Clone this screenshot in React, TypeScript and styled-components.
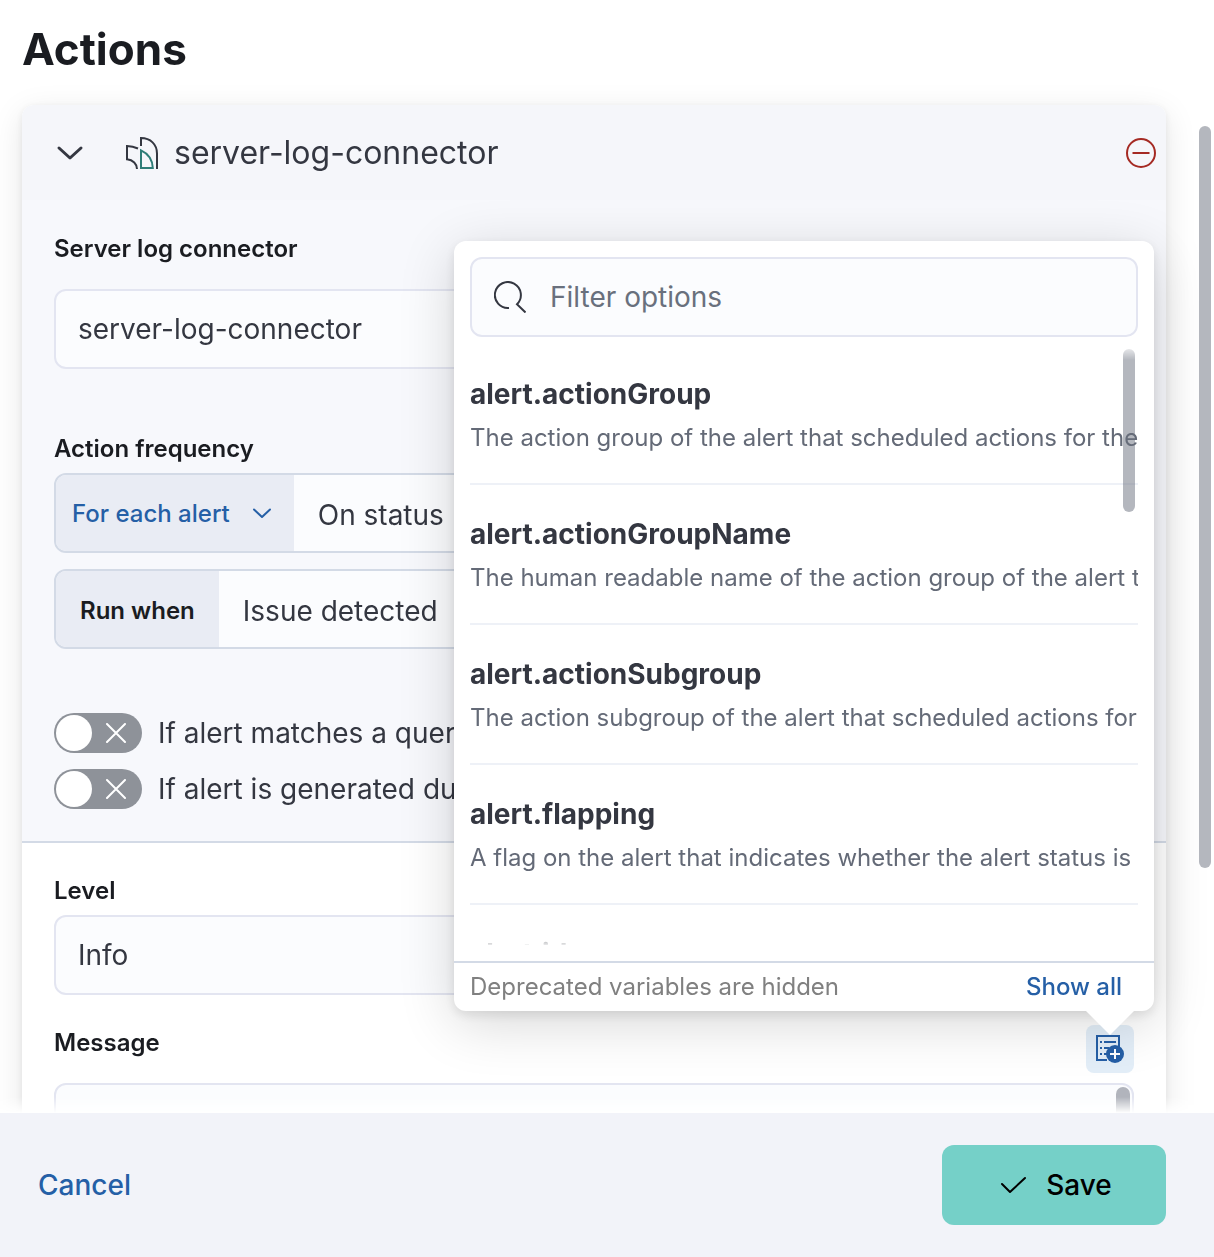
import React, { useState } from "react";
import styled, { createGlobalStyle, css } from "styled-components";

const color = {
  ink: "#1a1c21",
  text: "#343741",
  subdued: "#646a77",
  primary: "#255fa6",
  border: "#d3dae6",
  fieldBorder: "#e3e5f1",
  field: "#fbfcfe",
  prepend: "#e9ecf4",
  danger: "#a52a23",
  thumb: "rgba(105, 112, 125, 0.5)",
};

const GlobalStyle = createGlobalStyle`
  *, *::before, *::after { box-sizing: border-box; }
  body { margin: 0; background: #fff; }
  body, button, input, select, textarea {
    font-family: Inter, "Liberation Sans", sans-serif;
    font-size: 28px;
    color: ${color.text};
  }
  button { border: 0; background: none; padding: 0; cursor: pointer; }
`;

const Flyout = styled.div`
  display: flex;
  flex-direction: column;
  height: 100vh;
`;

const Body = styled.main`
  position: relative;
  flex: 1;
  min-height: 0;
  overflow: hidden;
  padding: 21px 48px 0 22px;
  mask-image: linear-gradient(to top, transparent 0, #000 16px);
`;

const Title = styled.h1`
  margin: 0 0 28px;
  font-size: 44px;
  line-height: 56px;
  font-weight: 700;
  color: ${color.ink};
`;

const PageThumb = styled.div`
  position: absolute;
  top: 126px;
  right: 3px;
  width: 12px;
  height: 742px;
  border-radius: 6px;
  background: ${color.thumb};
`;

const Card = styled.section`
  border-radius: 12px;
  background: #fff;
  box-shadow: 0 2px 8px rgba(0, 0, 0, 0.08), 0 8px 32px rgba(0, 0, 0, 0.1);
`;

const CardHeader = styled.header`
  display: flex;
  align-items: center;
  height: 95px;
  padding: 0 10px 0 32px;
  border-radius: 12px 12px 0 0;
  background: #f5f6fa;
`;

const IconButton = styled.button`
  display: flex;
  align-items: center;
  justify-content: center;
`;

const ConnectorName = styled.h2`
  display: flex;
  align-items: center;
  gap: 16px;
  flex: 1;
  margin: 0 0 0 40px;
  font-size: 32px;
  line-height: 48px;
  font-weight: 400;
`;

const Settings = styled.div`
  padding: 31px 32px 32px;
  border-bottom: 2px solid ${color.border};
  background: #f7f8fc;
`;

const Params = styled.div`
  padding: 30px 32px 32px;
`;

const Field = styled.div<{ $gap?: number; $space?: number }>`
  display: flex;
  flex-direction: column;
  gap: ${(p) => p.$gap ?? 6}px;
  margin-bottom: ${(p) => p.$space ?? 0}px;
`;

const labelText = css`
  font-size: 24px;
  line-height: 36px;
  font-weight: 600;
  color: ${color.ink};
`;

const Label = styled.label`
  ${labelText}
`;

const Select = styled.select`
  appearance: none;
  width: 100%;
  height: 80px;
  padding: 0 22px;
  border: 2px solid ${color.fieldBorder};
  border-radius: 12px;
  background: ${color.field};
`;

const Group = styled.div`
  display: flex;
  height: 80px;
  margin-bottom: 16px;
  border: 2px solid ${color.border};
  border-radius: 12px;
  background: ${color.field};
  overflow: hidden;
`;

const GroupSelect = styled.select`
  appearance: none;
  flex: 1;
  min-width: 0;
  padding: 4px 24px 0;
  border: 0;
  background: transparent;
`;

const PrependButton = styled.button`
  display: flex;
  align-items: center;
  gap: 20px;
  padding: 0 20px 0 16px;
  background: ${color.prepend};
  color: ${color.primary};
  font-size: 24px;
  font-weight: 500;
`;

const PrependLabel = styled.label`
  ${labelText}
  display: flex;
  align-items: center;
  padding: 4px 24px 0;
  background: ${color.prepend};
`;

const Switches = styled.div`
  display: flex;
  flex-direction: column;
  gap: 16px;
  margin-top: 64px;
`;

const SwitchRow = styled.label`
  display: flex;
  align-items: center;
  gap: 16px;
  height: 40px;
  white-space: nowrap;
`;

const SwitchInput = styled.input`
  position: absolute;
  opacity: 0;
`;

const Track = styled.span<{ $on: boolean }>`
  display: flex;
  flex-direction: ${(p) => (p.$on ? "row-reverse" : "row")};
  align-items: center;
  justify-content: space-between;
  width: 88px;
  height: 40px;
  padding: ${(p) => (p.$on ? "0 2px 0 16px" : "0 16px 0 2px")};
  border-radius: 20px;
  background: ${(p) => (p.$on ? color.primary : "#8e9299")};
`;

const Knob = styled.span`
  width: 36px;
  height: 36px;
  border-radius: 50%;
  background: #fff;
`;

const MessageHead = styled.div`
  display: flex;
  justify-content: space-between;
  align-items: flex-start;
`;

const Anchor = styled.div`
  position: relative;
`;

const AddVariable = styled.button`
  display: flex;
  align-items: center;
  justify-content: center;
  width: 48px;
  height: 48px;
  border-radius: 8px;
  background: #e3eef8;
`;

const MessageBox = styled.div`
  position: relative;
  display: flex;
`;

const TextArea = styled.textarea`
  flex: 1;
  height: 240px;
  padding: 22px;
  border: 2px solid ${color.fieldBorder};
  border-radius: 12px;
  background: ${color.field};
  resize: none;
`;

const MessageThumb = styled.div`
  position: absolute;
  top: 4px;
  right: 4px;
  width: 14px;
  height: 120px;
  border-radius: 7px;
  background: #b1b4bc;
`;

const Popover = styled.div`
  position: absolute;
  right: -20px;
  bottom: calc(100% + 14px);
  width: min(700px, calc(100vw - 100px));
  padding-top: 16px;
  border-radius: 12px;
  background: #fff;
  box-shadow: 0 4px 12px rgba(0, 0, 0, 0.1), 0 12px 56px rgba(0, 0, 0, 0.16);
`;

const Arrow = styled.div`
  position: absolute;
  top: 100%;
  right: 20px;
  width: 48px;
  height: 24px;
  background: #fff;
  clip-path: polygon(0 0, 100% 0, 50% 100%);
`;

const Search = styled.label`
  display: flex;
  align-items: center;
  gap: 24px;
  height: 80px;
  margin: 0 16px 8px;
  padding: 0 22px;
  border: 2px solid ${color.fieldBorder};
  border-radius: 12px;
  background: ${color.field};
`;

const SearchInput = styled.input`
  flex: 1;
  min-width: 0;
  padding: 0;
  border: 0;
  outline: 0;
  background: transparent;
  &::placeholder { color: #69707d; opacity: 1; }
`;

const ListFrame = styled.div`
  position: relative;
  height: 600px;
  margin: 0 16px 16px;
  overflow: hidden;
  mask-image: linear-gradient(
    to bottom,
    rgba(0, 0, 0, 0.1) 0,
    #000 15px,
    #000 calc(100% - 15px),
    rgba(0, 0, 0, 0.1) 100%
  );
`;

const List = styled.ul`
  margin: 0;
  padding: 0;
  list-style: none;
`;

const Item = styled.li`
  display: flex;
  flex-direction: column;
  gap: 4px;
  padding: 28px 0 26px;
  border-bottom: 2px solid #eef1f7;
  white-space: nowrap;
`;

const ItemName = styled.strong`
  line-height: 42px;
  font-weight: 700;
`;

const ItemText = styled.span`
  font-size: 24px;
  line-height: 38px;
  color: ${color.subdued};
`;

const ListThumb = styled.div`
  position: absolute;
  top: 4px;
  right: 3px;
  width: 12px;
  height: 163px;
  border-radius: 6px;
  background: ${color.thumb};
`;

const PopoverFooter = styled.div`
  display: flex;
  align-items: center;
  justify-content: space-between;
  height: 50px;
  padding: 0 32px 2px 16px;
  border-top: 2px solid ${color.border};
  font-size: 24px;
  color: #808080;
`;

const TextButton = styled.button<{ $small?: boolean }>`
  font-size: ${(p) => (p.$small ? 24 : 28)}px;
  font-weight: 500;
  color: ${color.primary};
`;

const Footer = styled.footer`
  display: flex;
  align-items: center;
  justify-content: space-between;
  height: 144px;
  padding: 0 48px 0 38px;
  background: #f2f3f9;
`;

const SaveButton = styled.button`
  display: flex;
  align-items: center;
  justify-content: center;
  gap: 20px;
  width: 224px;
  height: 80px;
  padding-left: 4px;
  border-radius: 12px;
  background: #75d0c8;
  color: #000;
  font-weight: 500;
`;

const ChevronIcon = () => (
  <svg width="32" height="32" viewBox="0 0 32 32" fill="none" stroke="#343741" strokeWidth="3" strokeLinecap="round" strokeLinejoin="round">
    <path d="M5 11 16 21 27 11" />
  </svg>
);

const SmallChevronIcon = () => (
  <svg width="24" height="24" viewBox="0 0 24 24" fill="none" stroke={color.primary} strokeWidth="2" strokeLinecap="round" strokeLinejoin="round">
    <path d="M4 8.500 12 16 20 8.500" />
  </svg>
);

const LogsIcon = () => (
  <svg width="32" height="32" viewBox="0 0 32 32" fill="none" stroke="#343741" strokeWidth="2">
    <path d="M12 11.500C8.500 10 5 9.200 1 9V22.300C7 22.800 11 27 11 32" />
    <path d="M15 9V1C24.500 1 31 7.500 31 16.500V32" />
    <path d="M15 13.300V31H26.800C26.500 23 22 16.500 15 13.300Z" stroke="#2f7d78" />
  </svg>
);

const RemoveIcon = () => (
  <svg width="30" height="30" viewBox="0 0 30 30" fill="none" stroke={color.danger} strokeWidth="2">
    <circle cx="15" cy="15" r="14" />
    <path d="M6.500 15H23.500" />
  </svg>
);

const CrossIcon = () => (
  <svg width="20" height="20" viewBox="0 0 20 20" fill="none" stroke="#fff" strokeWidth="2" strokeLinecap="round">
    <path d="M1 1 19 19M19 1 1 19" />
  </svg>
);

const SearchIcon = () => (
  <svg width="32" height="32" viewBox="0 0 32 32" fill="none" stroke="#343741" strokeWidth="2">
    <path d="M15 27A13 13 0 1 1 23 23.300L31.500 31.500" />
  </svg>
);

const CheckIcon = () => (
  <svg width="26" height="20" viewBox="0 0 26 20" fill="none" stroke="#000" strokeWidth="2" strokeLinecap="round" strokeLinejoin="round">
    <path d="M2 9 10 17 25 3" />
  </svg>
);

const VariableIcon = () => (
  <svg width="28" height="28" viewBox="0 0 28 28" fill="none" stroke={color.primary} strokeWidth="2">
    <path d="M11 25H1V1H23V12" />
    <path d="M4 7H6M8 7H20M4 13H6M8 13H13M4 19H6M8 19H11" />
    <circle cx="19" cy="19" r="9" fill={color.primary} stroke="none" />
    <path d="M14 19H24M19 14V24" stroke="#fff" />
  </svg>
);

const variables = [
  ["alert.actionGroup", "The action group of the alert that scheduled actions for the rule."],
  ["alert.actionGroupName", "The human readable name of the action group of the alert that scheduled actions for the rule."],
  ["alert.actionSubgroup", "The action subgroup of the alert that scheduled actions for the rule."],
  ["alert.flapping", "A flag on the alert that indicates whether the alert status is"],
  ["alert.id", "The ID of the alert that scheduled actions for the rule."],
];

function Switch({ children }: { children: React.ReactNode }) {
  const [on, setOn] = useState(false);
  return (
    <SwitchRow>
      <SwitchInput type="checkbox" role="switch" checked={on} onChange={() => setOn(!on)} />
      <Track $on={on}>
        <Knob />
        <CrossIcon />
      </Track>
      {children}
    </SwitchRow>
  );
}

function VariablePopover() {
  return (
    <Popover role="dialog" aria-label="Add variable">
      <Search>
        <SearchIcon />
        <SearchInput type="text" placeholder="Filter options" aria-label="Filter options" />
      </Search>
      <ListFrame>
        <List>
          {variables.map(([name, description]) => (
            <Item key={name}>
              <ItemName>{name}</ItemName>
              <ItemText>{description}</ItemText>
            </Item>
          ))}
        </List>
        <ListThumb />
      </ListFrame>
      <PopoverFooter>
        <span>Deprecated variables are hidden</span>
        <TextButton type="button" $small>Show all</TextButton>
      </PopoverFooter>
      <Arrow />
    </Popover>
  );
}

export default function App() {
  return (
    <Flyout>
      <GlobalStyle />
      <Body>
        <Title>Actions</Title>
        <Card>
          <CardHeader>
            <IconButton type="button" aria-label="Toggle action"><ChevronIcon /></IconButton>
            <ConnectorName><LogsIcon />server-log-connector</ConnectorName>
            <IconButton type="button" aria-label="Remove action"><RemoveIcon /></IconButton>
          </CardHeader>
          <Settings>
            <Field $gap={22} $space={62}>
              <Label htmlFor="connector">Server log connector</Label>
              <Select id="connector"><option>server-log-connector</option></Select>
            </Field>
            <Field>
              <Label htmlFor="frequency">Action frequency</Label>
              <Group>
                <PrependButton type="button">For each alert<SmallChevronIcon /></PrependButton>
                <GroupSelect id="frequency"><option>On status</option></GroupSelect>
              </Group>
            </Field>
            <Group>
              <PrependLabel htmlFor="run-when">Run when</PrependLabel>
              <GroupSelect id="run-when"><option>Issue detected</option></GroupSelect>
            </Group>
            <Switches>
              <Switch>If alert matches a query</Switch>
              <Switch>If alert is generated during timeframe</Switch>
            </Switches>
          </Settings>
          <Params>
            <Field $space={30}>
              <Label htmlFor="level">Level</Label>
              <Select id="level"><option>Info</option></Select>
            </Field>
            <Field $gap={10}>
              <MessageHead>
                <Label htmlFor="message">Message</Label>
                <Anchor>
                  <AddVariable type="button" aria-label="Add variable"><VariableIcon /></AddVariable>
                  <VariablePopover />
                </Anchor>
              </MessageHead>
              <MessageBox>
                <TextArea id="message" />
                <MessageThumb />
              </MessageBox>
            </Field>
          </Params>
        </Card>
        <PageThumb />
      </Body>
      <Footer>
        <TextButton type="button">Cancel</TextButton>
        <SaveButton type="button"><CheckIcon />Save</SaveButton>
      </Footer>
    </Flyout>
  );
}
